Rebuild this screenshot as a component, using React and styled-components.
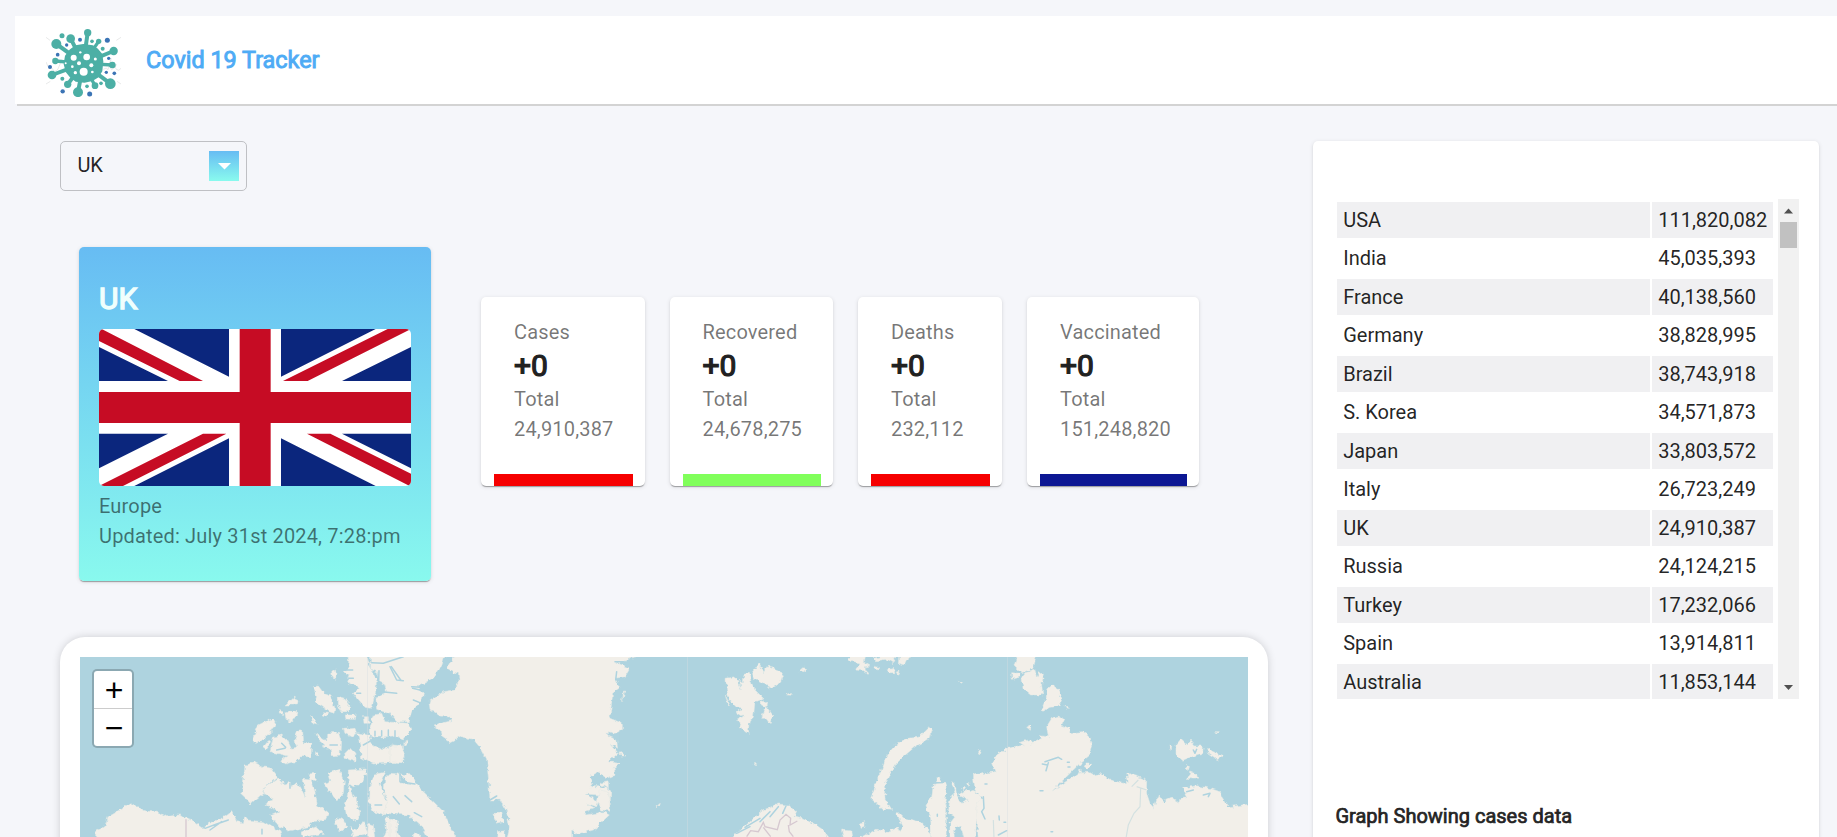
import React from 'react';
import styled, { createGlobalStyle } from 'styled-components';

const GlobalStyle = createGlobalStyle`
  *, *::before, *::after { box-sizing: border-box; }
  html, body { margin: 0; height: 100%; overflow: hidden; }
  body {
    background: #f5f6fa;
    color: rgba(0, 0, 0, 0.87);
    font-family: Roboto, "Liberation Sans", sans-serif;
    font-size: 20px;
  }
  h1, h2, h3, p { margin: 0; font-weight: 400; }
`;

const cardShadow = '0 2px 1px -1px rgba(0,0,0,.2), 0 1px 1px 0 rgba(0,0,0,.14), 0 1px 4px 0 rgba(0,0,0,.12)';

const Page = styled.div`
  height: 100vh;
  overflow: hidden;
  padding: 16px 0 0 15px;
`;

const Header = styled.header`
  display: flex;
  align-items: center;
  height: 88px;
  padding-left: 31px;
  background: #fff;
  box-shadow: 2px 2px #d3d3d3;
`;

const Logo = styled.svg`
  width: 75px;
  height: 75px;
  margin-top: 5px;
`;

const Title = styled.h1`
  margin: 0 0 0 25px;
  color: #4eabf5;
  font-size: 23.4px;
  line-height: 30px;
  -webkit-text-stroke: 0.9px #4eabf5;
`;

const Content = styled.div`
  display: flex;
  align-items: flex-start;
  gap: 45px;
  padding: 37px 18px 0 45px;
`;

const Main = styled.main`
  flex: none;
  width: 1208px;
`;

const Select = styled.div`
  display: flex;
  align-items: center;
  justify-content: space-between;
  width: 187px;
  height: 50px;
  padding: 0 7px 0 16.4px;
  border: 1px solid #bfc0c4;
  border-radius: 5px;
`;

const SelectValue = styled.span`
  padding-bottom: 2px;
  line-height: 22px;
`;

const SelectArrow = styled.span`
  display: flex;
  align-items: center;
  justify-content: center;
  width: 30px;
  height: 30px;
  background: linear-gradient(#67bcf3, #89faee);
`;

const Summary = styled.section`
  display: flex;
  align-items: flex-start;
  padding: 56px 0 0 19px;
`;

const CountryCard = styled.article`
  width: 352px;
  height: 334px;
  margin-right: 50px;
  padding: 33px 20px 0;
  border-radius: 5px;
  background: linear-gradient(#67bcf3, #89f9ee);
  box-shadow: ${cardShadow};
`;

const CountryName = styled.h2`
  margin-bottom: 12px;
  color: #f0fffd;
  font-size: 30px;
  line-height: 37px;
  -webkit-text-stroke: 1.4px #f0fffd;
`;

const Flag = styled.svg`
  display: block;
  width: 312px;
  height: 157px;
  margin-bottom: 5px;
  border-radius: 5px;
`;

const Caption = styled.p`
  color: rgba(0, 0, 0, 0.54);
  line-height: 30px;
  letter-spacing: 0.17px;
  white-space: nowrap;
`;

const Stats = styled.div`
  display: flex;
  gap: 25px;
  margin-top: 50px;
`;

const StatCard = styled.article`
  width: ${(p) => p.$width}px;
  height: 189px;
  padding: 20px 12px 0 13px;
  border-radius: 5px;
  background: #fff;
  box-shadow: ${cardShadow};
`;

const StatBody = styled.div`
  height: 157px;
  padding-left: 20px;
`;

const Delta = styled.h2`
  font-size: 30px;
  line-height: 37px;
  color: #212121;
  -webkit-text-stroke: 1.2px #212121;
`;

const StatBar = styled.div`
  height: 12px;
  background: ${(p) => p.$color};
`;

const MapCard = styled.section`
  position: relative;
  height: 650px;
  margin-top: 56px;
  padding: 20px;
  border-radius: 25px;
  background: #fff;
  box-shadow: 0 0 10px -1px rgba(0, 0, 0, 0.2);
`;

const MapCanvas = styled.svg`
  display: block;
  width: 1168px;
  height: 610px;
  background: #aed3df;
`;

const ZoomControl = styled.div`
  position: absolute;
  top: 32px;
  left: 32px;
  width: 42px;
  border: 2px solid rgba(0, 0, 0, 0.2);
  border-radius: 5px;
  background: #fff;
  background-clip: padding-box;
`;

const ZoomButton = styled.div`
  display: flex;
  align-items: center;
  justify-content: center;
  height: 37px;
  padding: 1px 0 0 2px;
  color: #000;
  font: 32px/36px "Liberation Sans", sans-serif;

  & + & { height: 38px; border-top: 1px solid #ccc; }
`;

const Sidebar = styled.aside`
  width: 506px;
  height: 900px;
  padding: 58px 20px 0 24px;
  border-radius: 5px;
  background: #fff;
  box-shadow: ${cardShadow};
`;

const TableScroll = styled.div`
  display: flex;
  justify-content: space-between;
  height: 500px;
  overflow: hidden;
`;

const Table = styled.div`
  display: flex;
  flex-direction: column;
  flex: none;
  gap: 2.5px;
  width: 436px;
  padding-top: 2.8px;
`;

const Row = styled.div`
  display: grid;
  grid-template-columns: 313px 121px;
  column-gap: 2px;
  flex: none;
  height: 36px;
  line-height: 36px;

  & > span {
    padding-left: 6.2px;
    background: ${(p) => (p.$striped ? '#f0f0f2' : '#fff')};
  }
`;

const ScrollTrack = styled.div`
  display: flex;
  flex-direction: column;
  align-items: center;
  width: 21px;
  background: #f1f1f1;
`;

const ScrollThumb = styled.div`
  width: 17px;
  height: 26px;
  margin-bottom: auto;
  background: #c1c1c1;
`;

const ScrollArrow = styled.svg`
  width: 21px;
  height: 23px;
  fill: #505050;
`;

const GraphTitle = styled.h3`
  margin: 102px 0 0 -1.6px;
  font-size: 20px;
  line-height: 30px;
  -webkit-text-stroke: 0.7px #212121;
`;

const stats = [
  { label: 'Cases', total: '24,910,387', color: '#f60000', width: 163.5 },
  { label: 'Recovered', total: '24,678,275', color: '#80ff5b', width: 163.5 },
  { label: 'Deaths', total: '232,112', color: '#f60000', width: 144 },
  { label: 'Vaccinated', total: '151,248,820', color: '#0c1793', width: 172 },
];

const countries = [
  ['USA', '111,820,082'],
  ['India', '45,035,393'],
  ['France', '40,138,560'],
  ['Germany', '38,828,995'],
  ['Brazil', '38,743,918'],
  ['S. Korea', '34,571,873'],
  ['Japan', '33,803,572'],
  ['Italy', '26,723,249'],
  ['UK', '24,910,387'],
  ['Russia', '24,124,215'],
  ['Turkey', '17,232,066'],
  ['Spain', '13,914,811'],
  ['Australia', '11,853,144'],
];

// Spikes run from the body centre to a knob: [x, y, knob radius]
const spikes = [
  [49, 72, 15], [92, 56, 13], [143, 38, 11], [176, 64, 8], [221, 93, 12.5], [217, 135, 10],
  [211, 191, 16], [165, 197, 10], [114, 217, 15], [83, 193, 11], [36, 165, 13], [46, 123, 9.5],
];
const greenDots = [[66, 47, 7.5], [156, 64, 5.5], [188, 86, 6], [67, 176, 6], [183, 190, 5.5], [141, 199, 5.5]];
const blueDots = [
  [202, 61, 7.5], [120, 59, 6], [80, 75, 5], [53, 104, 5.5], [30, 141, 6], [206, 115, 5],
  [199, 157, 5], [223, 160, 5.5], [68, 214, 6.5], [149, 222, 7.5],
];
const holes = [
  [101, 113, 9], [140, 111, 10], [131, 155, 12], [117, 130, 6], [154, 136, 6], [166, 117, 4.5],
  [97, 140, 4], [106, 158, 5], [157, 156, 4], [121, 97, 3.5], [77, 130, 3],
];

function VirusLogo() {
  return (
    <Logo viewBox="18 15 225 225" aria-hidden="true">
      <g stroke="#e3e4e5" strokeWidth="2.5" fill="none">
        <path d="M18 52l12 9M243 52l-14 9M18 192l13-8M243 192l-12-8" />
        <path d="M18 126l9 20q8-8 12 3t15-2q7-15 10-28M190 148q10-8 14 1l9-34q-4 33 2 34q12-6 14-16q-8 8 0 15t14-3" />
      </g>
      <g fill="#4cafa5" stroke="#4cafa5">
        {spikes.map(([x, y, r]) => (
          <g key={`${x}-${y}`}>
            <line x1="130" y1="130" x2={x} y2={y} strokeWidth={r > 10 ? 12 : 10} />
            <circle cx={x} cy={y} r={r} stroke="none" />
          </g>
        ))}
        <path d="M130 75 158 79 172 89 184 103 187 125 184 153 173 170 157 180 133 185 108 182 92 170 80 155 74 132 78 108 91 91 107 79Z" strokeWidth="6" strokeLinejoin="round" />
      </g>
      <g fill="#4cafa5">{greenDots.map(([x, y, r]) => <circle key={x} cx={x} cy={y} r={r} />)}</g>
      <g fill="#3b74b5">{blueDots.map(([x, y, r]) => <circle key={x} cx={x} cy={y} r={r} />)}</g>
      <g fill="#fff">{holes.map(([x, y, r]) => <circle key={x} cx={x} cy={y} r={r} />)}</g>
      <rect x="18" y="231" width="225" height="10" fill="#fff" />
    </Logo>
  );
}

function UnionFlag() {
  return (
    <Flag viewBox="0 0 936 471" preserveAspectRatio="none" aria-label="Flag of the United Kingdom">
      <rect width="936" height="471" fill="#fff" />
      <g fill="#0b267d">
        <path d="M106 0H390V143ZM0 54V156H207ZM546 143 830 0H546ZM936 54V156H729Z" />
        <path d="M0 314H207L0 418ZM106 471 390 328V471ZM546 328 830 471H546ZM936 314H729L936 418Z" />
      </g>
      <g fill="#c60c24">
        <path d="M0 0H8L312 156H242L0 36ZM866 0H936L626 156H552ZM312 314H382L72 471H0ZM624 314H694L936 434V471H932Z" />
        <path d="M422 0H515V189H936V282H515V471H422V282H0V189H422Z" />
      </g>
    </Flag>
  );
}

// Coastlines are grouped by survey sheet; each sheet has its own origin and a third-of-a-pixel grid.
const sheets = [
  {
    origin: [230, 650],
    land: [
      '45,345 75,338 100,350 125,355 143,380 105,410 100,430 72,452 62,462 50,447 32,430 40,400',
      '143,385 160,402 180,398 185,410 200,398 212,412 225,440 220,388 245,390 255,425 262,465 297,492 290,508 250,515 235,530 175,543 135,518 122,497 150,485 110,465 115,450 130,447 102,430 108,410',
      '235,372 258,370 255,395 240,390',
      '65,270 85,225 105,215 130,205 138,218 128,240 105,262 80,280',
      '100,292 115,272 122,278 108,297',
      '120,305 130,262 155,255 172,270 185,298 200,295 195,265 205,240 215,240 218,275 245,280 243,320 215,320 190,335 165,343 152,330 175,318 150,312',
      '165,165 190,142 207,150 205,165 180,165',
      '165,190 200,178 200,195 185,215 168,208',
      '147,182 160,185 157,197 148,192',
      '247,110 265,108 280,128 300,135 315,175 312,190 298,185 270,165 255,155 260,140',
      '325,140 345,145 360,165 355,185 335,185 325,165',
      '305,65 320,60 318,88 305,78',
      '242,195 262,225 250,222',
      '345,195 378,195 375,208 348,207',
      '400,200 415,200 415,220 402,220',
      '280,188 293,190 290,198 280,195',
      '257,305 266,305 266,317 256,315',
      '258,250 275,262 290,272 290,250 325,247 332,270 330,318 305,320 300,295 275,290 285,285 265,270',
      '340,235 375,232 380,255 365,262 345,250',
      '345,310 360,295 375,310 375,333 345,325',
      '383,248 415,255 425,285 460,300 490,285 520,288 522,335 430,342 395,325 390,290',
      '418,240 430,195 455,190 465,215 535,220 543,240 520,270 490,258 440,262 418,258',
      '350,5 408,5 420,55 440,85 437,125 425,175 405,172 370,130 388,115 350,95 358,75 343,65 360,50',
      '422,5 645,5 630,55 610,85 585,100 560,110 580,130 575,150 545,185 535,215 500,215 480,192 440,178 438,145 470,124 464,104 447,94 442,65 422,58',
      '282,400 300,395 293,370 330,358 343,395 340,430 322,455 300,425',
      '355,360 405,357 408,370 395,400 370,410 355,400',
      '358,405 368,440 378,445 390,490 380,515 350,500 345,470',
      '415,455 418,410 435,372 465,367 450,400 460,430 475,460 460,495 430,485',
      '465,385 480,370 508,372 515,400 545,405 510,372 545,375 560,405 600,445 640,485 660,530 685,575 600,575 575,530 535,495 460,490 475,450 462,430',
      '465,500 505,510 500,575 455,575 470,540',
      '415,520 430,525 435,575 412,575',
      '480,565 500,540 510,565',
      '315,515 335,500 350,530 330,545',
      '215,545 260,530 280,550 220,561',
      '360,530 380,540 400,515 415,550 370,561',
      '524,275 533,270 530,284',
    ],
    water: [
      'M425 38 460 40 520 20M447 62 446 95M484 50 512 90M440 140 455 125 500 130M575 112 545 110M575 160 550 150M400 285 430 268 520 272M480 190 478 215',
      'M350 60h18M356 85h14M380 130h12M435 258v-14M455 258v-16M475 258v-18M495 262v-20M155 280l12 12M140 300l25-5M300 285h22M180 400v15M435 465h20M490 440l18 22M545 455l-20-18M575 500l-22-12',
    ],
  },
  {
    origin: [50, 620],
    land: [
      '137,670 137,630 165,620 175,590 215,568 240,548 262,560 285,572 330,578 350,590 385,585 430,602 460,625 480,610 525,590 545,575 560,605 580,608 585,590 592,600 640,605 690,635 700,670',
      '845,152 858,155 857,175 847,168',
    ],
    water: ['M465 625 500 612 535 600M480 630 515 605M636 628v14'],
    border: 'M408 598V660',
  },
  {
    origin: [390, 640],
    land: [
      '190,35 190,51 172,85 190,97 205,100 207,120 192,150 160,155 117,185 120,208 150,228 187,232 185,242 132,255 150,270 155,290 180,308 215,290 250,298 272,325 290,360 295,410 300,480 330,480 350,515 358,560 350,610 545,610 545,572 560,582 610,570 658,525 640,515 590,525 583,515 615,505 590,490 620,500 625,485 585,462 630,465 655,490 660,515 662,450 635,440 600,440 608,430 600,410 625,395 650,415 675,405 672,385 690,370 655,365 685,340 660,310 683,325 680,300 655,290 655,275 675,280 697,270 697,250 660,235 668,160 690,145 675,115 705,110 720,85 680,70 735,51 735,35',
      '655,490 662,450 630,430 655,425',
      '628,450 655,455 660,512 635,510 622,480',
      '308,520 335,520 340,545 320,550',
      '322,575 345,572 345,600 320,600',
      '0,318 30,318 45,345 35,368 0,365',
      '0,540 20,545 20,600 0,600',
      '70,582 85,578 95,600 70,600',
      '690,335 708,348 692,348',
      '795,500 808,490 806,498',
      '700,150 705,150 698,185',
      '40,312 52,303 48,315',
    ],
    water: ['M0 80 20 120 40 122M30 400V425L75 432M68 145l22 5M680 95 677 120M675 65h25M660 230h22M690 275v30M300 480l20-12M310 500l25-10'],
  },
  {
    origin: [700, 640],
    land: [
      '78,115 105,110 125,150 118,120 130,130 132,100 145,97 155,130 165,150 190,175 165,185 160,235 148,240 145,280 135,275 112,240 130,230 108,215 130,205 108,200 88,180 80,150',
      '76,165 88,198 82,190',
      '158,100 178,70 190,95 205,72 215,85 250,100 240,130 215,145 185,130 160,115',
      '183,180 200,190 198,200 184,195',
      '190,215 200,200 218,225 210,248 200,235 185,235',
      '298,92 310,82 320,88 308,95',
      '260,165 270,160 277,166',
      '445,62 455,40 495,40 490,65 510,78 495,80 505,103 490,92 465,90 482,70',
      '520,55 590,40 580,68 565,60 530,65',
      '525,80 535,82 535,90 522,87', '560,90 580,85 585,98 565,98', '588,98 600,93 598,103',
      '600,40 655,40 625,55 615,75 598,72',
      '775,122 788,126 782,131',
      '685,262 697,270 690,295 645,320 610,350 590,370 565,410 553,440 555,475 575,508 545,505 530,490 512,475 520,455 527,430 545,390 560,345 590,312 620,295 655,292',
      '100,590 150,545 190,510 235,492 265,495 290,517 285,528 310,535 340,550 370,570 400,610 95,610',
      '478,550 495,545 495,562 480,565',
      '425,570 455,573 460,600 432,600',
      '480,605 480,595 530,568 560,575 595,563 600,575 610,560 588,520 597,517 615,535 660,545 695,580 695,605',
      '700,432 735,430 740,450 732,480 740,500 738,605 695,605 692,535 675,500 685,480 695,475',
      '708,415 720,410 725,425 710,423',
      '750,475 765,460 755,425 765,430 770,465 785,490 805,480 775,465 800,448 835,460 850,480 838,510 845,530 830,540 825,605 795,605 780,555 760,565 765,605 750,605 750,550 765,530 745,520',
      '803,430 810,428 808,438', '785,445 797,442 788,452', '832,332 842,330 838,342', '162,371 170,371 166,377',
    ],
    water: ['M110 580 150 560M135 562 180 535M180 545 210 515M210 530 235 500M248 520 258 498M712 523v6M858 430v6'],
    border: 'M140 590 152 572 175 575 190 547 195 560 232 569 240 540 258 523 272 535 270 555 292 543M190 562 212 590M265 555 268 575 280 590',
  },
  {
    origin: [980, 620],
    land: [
      '-20,465 0,462 45,455 35,430 50,405 80,385 130,375 120,368 150,358 155,370 185,355 180,347 205,350 200,320 215,295 235,288 252,298 245,315 268,325 270,338 310,335 330,350 338,380 330,405 300,430 220,510 265,480 295,460 325,457 340,465 370,460 390,480 430,490 445,485 440,460 475,470 500,480 500,520 510,550 522,565 535,525 550,545 575,535 597,548 600,535 620,530 608,505 650,497 690,505 720,515 725,530 745,560 804,553 820,553 820,670 -5,670 -10,550 10,535 -15,510',
      '115,95 168,95 168,111 160,145 125,158 102,135',
      '122,175 135,158 165,150 170,170 178,155 190,165 185,195 188,225 155,225 130,205',
      '95,158 120,160 118,172 97,178',
      '205,205 217,195 222,205 230,205 248,240 240,258 210,262 183,275 195,245',
      '255,255 262,262 272,267 260,268',
      '588,375 602,358 620,375 630,360 645,378 670,378 668,400 640,408 605,422 588,405',
      '683,385 700,395 730,408 715,420 685,400',
      '622,475 630,455 650,462 653,478',
      '315,432 332,432 325,447 313,440',
      '292,455 303,450 306,460',
      '618,440 628,442 624,452',
      '569,378 575,378 573,392',
      '140,322 152,315 148,328', '707,335 718,335 712,339',
    ],
    water: ['M195 425 235 412 245 418M205 428 198 452M187 432l15 3M262 427h6M264 441h6M180 512h9M15 492h6M213 635h5M10 530 12 565 5 575 15 597M57 588 58 600M72 607h5M55 645 80 632M670 525 690 520 685 530M620 515 640 510M640 390 645 400 650 388'],
    river: 'M482 505 480 560 462 580 445 615 438 655M475 480 455 500M500 510 470 500M40 600 42 655',
  },
];

function ArcticMap() {
  return (
    <MapCanvas viewBox="80 657 1168 610" aria-label="Map">
      {sheets.map(({ origin, land, water, border, river }) => (
        <g key={origin.join()} transform={`translate(${origin}) scale(0.33333)`}>
          <filter
            id={`coast${origin[0]}`}
            x="-60"
            y="-30"
            width="1200"
            height="800"
            filterUnits="userSpaceOnUse"
            colorInterpolationFilters="sRGB"
          >
            <feTurbulence type="fractalNoise" baseFrequency="0.07" numOctaves="2" seed="4" result="noise" />
            <feDisplacementMap in="SourceGraphic" in2="noise" scale="16" xChannelSelector="R" yChannelSelector="G" />
          </filter>
          <g fill="#f2efe9" stroke="#e2e8e4" strokeWidth="1.5" strokeLinejoin="round" filter={`url(#coast${origin[0]})`}>
            {land.map((points) => <polygon key={points} points={points} />)}
          </g>
          {water.map((d) => <path key={d} d={d} fill="none" stroke="#aed3df" strokeWidth="4.5" strokeLinejoin="round" strokeLinecap="round" />)}
          {river && <path d={river} fill="none" stroke="#d3e1e1" strokeWidth="3.5" />}
          {border && <path d={border} fill="none" stroke="#d6c8d0" strokeWidth="4" />}
        </g>
      ))}
      <path d="M367.5 657V1267M687.5 657V1267M1007.5 657V1267" stroke="#d8dfe0" strokeOpacity="0.4" />
    </MapCanvas>
  );
}

export default function App() {
  return (
    <Page>
      <GlobalStyle />
      <Header>
        <VirusLogo />
        <Title>Covid 19 Tracker</Title>
      </Header>
      <Content>
        <Main>
          <Select role="button">
            <SelectValue>UK</SelectValue>
            <SelectArrow>
              <svg width="13" height="7" viewBox="0 0 13 7"><path d="M0 0h13L6.5 6.5Z" fill="#fff" /></svg>
            </SelectArrow>
          </Select>
          <Summary>
            <CountryCard>
              <CountryName>UK</CountryName>
              <UnionFlag />
              <Caption>Europe</Caption>
              <Caption>Updated: July 31st 2024, 7:28:pm</Caption>
            </CountryCard>
            <Stats>
              {stats.map((s) => (
                <StatCard key={s.label} $width={s.width}>
                  <StatBody>
                    <Caption>{s.label}</Caption>
                    <Delta>+0</Delta>
                    <Caption>Total</Caption>
                    <Caption>{s.total}</Caption>
                  </StatBody>
                  <StatBar $color={s.color} />
                </StatCard>
              ))}
            </Stats>
          </Summary>
          <MapCard>
            <ArcticMap />
            <ZoomControl>
              <ZoomButton role="button">+</ZoomButton>
              <ZoomButton role="button">−</ZoomButton>
            </ZoomControl>
          </MapCard>
        </Main>
        <Sidebar>
          <TableScroll>
            <Table>
              {countries.map(([name, cases], i) => (
                <Row key={name} $striped={i % 2 === 0}>
                  <span>{name}</span>
                  <span>{cases}</span>
                </Row>
              ))}
            </Table>
            <ScrollTrack>
              <ScrollArrow viewBox="0 0 21 23"><path d="M6 14.5h9L10.5 9.5Z" /></ScrollArrow>
              <ScrollThumb />
              <ScrollArrow viewBox="0 0 21 23"><path d="M6 9h9l-4.500 5Z" /></ScrollArrow>
            </ScrollTrack>
          </TableScroll>
          <GraphTitle>Graph Showing cases data</GraphTitle>
        </Sidebar>
      </Content>
    </Page>
  );
}
